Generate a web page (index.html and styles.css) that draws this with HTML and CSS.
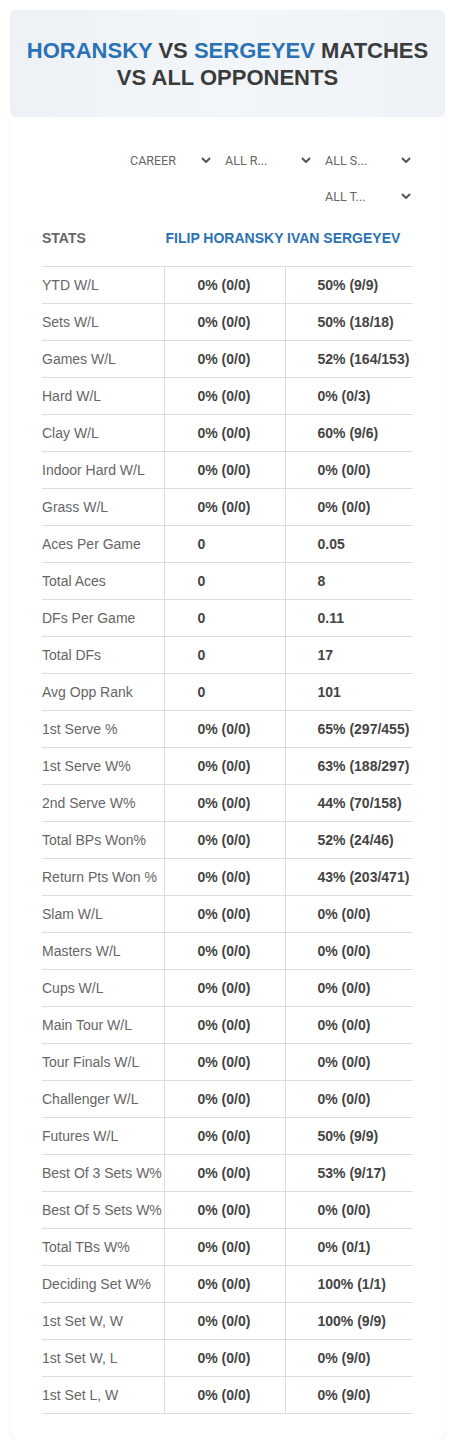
FILE: index.html
```html
<!DOCTYPE html>
<html lang="en">
<head>
    <meta charset="utf-8">
    <title>Horansky vs Sergeyev</title>
    <link rel="stylesheet" href="styles.css">
</head>
<body>
    <div class="page">
        <div class="title-box">
            <h1><span class="blue">HORANSKY</span> VS <span class="blue">SERGEYEV</span> MATCHES<br>VS ALL OPPONENTS</h1>
        </div>
        <div class="card">
            <div class="filters">
                <div class="pick first"><span>CAREER</span><svg viewBox="0 0 10 6"><path d="M1 1l4 4 4-4"/></svg></div>
                <div class="pick"><span>ALL R...</span><svg viewBox="0 0 10 6"><path d="M1 1l4 4 4-4"/></svg></div>
                <div class="pick"><span>ALL S...</span><svg viewBox="0 0 10 6"><path d="M1 1l4 4 4-4"/></svg></div>
                <div class="pick"><span>ALL T...</span><svg viewBox="0 0 10 6"><path d="M1 1l4 4 4-4"/></svg></div>
            </div>
            <table class="stats">
                <thead>
                    <tr>
                        <th class="c1">STATS</th>
                        <th class="c2">FILIP HORANSKY</th>
                        <th class="c3">IVAN SERGEYEV</th>
                    </tr>
                </thead>
                <tbody>
                    <tr><td>YTD W/L</td><td>0% (0/0)</td><td>50% (9/9)</td></tr>
                    <tr><td>Sets W/L</td><td>0% (0/0)</td><td>50% (18/18)</td></tr>
                    <tr><td>Games W/L</td><td>0% (0/0)</td><td>52% (164/153)</td></tr>
                    <tr><td>Hard W/L</td><td>0% (0/0)</td><td>0% (0/3)</td></tr>
                    <tr><td>Clay W/L</td><td>0% (0/0)</td><td>60% (9/6)</td></tr>
                    <tr><td>Indoor Hard W/L</td><td>0% (0/0)</td><td>0% (0/0)</td></tr>
                    <tr><td>Grass W/L</td><td>0% (0/0)</td><td>0% (0/0)</td></tr>
                    <tr><td>Aces Per Game</td><td>0</td><td>0.05</td></tr>
                    <tr><td>Total Aces</td><td>0</td><td>8</td></tr>
                    <tr><td>DFs Per Game</td><td>0</td><td>0.11</td></tr>
                    <tr><td>Total DFs</td><td>0</td><td>17</td></tr>
                    <tr><td>Avg Opp Rank</td><td>0</td><td>101</td></tr>
                    <tr><td>1st Serve %</td><td>0% (0/0)</td><td>65% (297/455)</td></tr>
                    <tr><td>1st Serve W%</td><td>0% (0/0)</td><td>63% (188/297)</td></tr>
                    <tr><td>2nd Serve W%</td><td>0% (0/0)</td><td>44% (70/158)</td></tr>
                    <tr><td>Total BPs Won%</td><td>0% (0/0)</td><td>52% (24/46)</td></tr>
                    <tr><td>Return Pts Won %</td><td>0% (0/0)</td><td>43% (203/471)</td></tr>
                    <tr><td>Slam W/L</td><td>0% (0/0)</td><td>0% (0/0)</td></tr>
                    <tr><td>Masters W/L</td><td>0% (0/0)</td><td>0% (0/0)</td></tr>
                    <tr><td>Cups W/L</td><td>0% (0/0)</td><td>0% (0/0)</td></tr>
                    <tr><td>Main Tour W/L</td><td>0% (0/0)</td><td>0% (0/0)</td></tr>
                    <tr><td>Tour Finals W/L</td><td>0% (0/0)</td><td>0% (0/0)</td></tr>
                    <tr><td>Challenger W/L</td><td>0% (0/0)</td><td>0% (0/0)</td></tr>
                    <tr><td>Futures W/L</td><td>0% (0/0)</td><td>50% (9/9)</td></tr>
                    <tr><td>Best Of 3 Sets W%</td><td>0% (0/0)</td><td>53% (9/17)</td></tr>
                    <tr><td>Best Of 5 Sets W%</td><td>0% (0/0)</td><td>0% (0/0)</td></tr>
                    <tr><td>Total TBs W%</td><td>0% (0/0)</td><td>0% (0/1)</td></tr>
                    <tr><td>Deciding Set W%</td><td>0% (0/0)</td><td>100% (1/1)</td></tr>
                    <tr><td>1st Set W, W</td><td>0% (0/0)</td><td>100% (9/9)</td></tr>
                    <tr><td>1st Set W, L</td><td>0% (0/0)</td><td>0% (9/0)</td></tr>
                    <tr><td>1st Set L, W</td><td>0% (0/0)</td><td>0% (9/0)</td></tr>
                </tbody>
            </table>
        </div>
    </div>
</body>
</html>
```

FILE: styles.css
```css
body {
    margin: 0;
    background: #fff;
    font-family: "Liberation Sans", Arial, sans-serif;
}
.page {
    padding: 10px 10px 0;
}
.title-box {
    height: 107px;
    border-radius: 6px;
    background: linear-gradient(90deg, #edf1f5 0%, #f3f6f9 50%, #eef2f6 100%);
    display: flex;
    align-items: center;
    justify-content: center;
}
.title-box h1 {
    margin: 0;
    padding-top: 1px;
    font-size: 22px;
    line-height: 27px;
    font-weight: bold;
    text-align: center;
    color: #3b3b3b;
}
.blue {
    color: #2b72b4;
}
.card {
    background: #fff;
    border-radius: 0 0 8px 8px;
    box-shadow: 0 1px 2px rgba(0, 0, 0, 0.08);
    padding: 25px 32px 25px;
}
.filters {
    display: flex;
    flex-wrap: wrap;
    justify-content: flex-end;
    column-gap: 5px;
    margin-right: -2px;
}
.pick {
    width: 95px;
    height: 36px;
    box-sizing: border-box;
    padding: 0 4px 0 5px;
    display: flex;
    align-items: center;
    justify-content: space-between;
    font-family: Roboto, "Open Sans", sans-serif;
    font-size: 12.5px;
    color: #666;
}
.pick.first {
    padding-left: 10px;
}
.pick svg {
    width: 10px;
    height: 6px;
    fill: none;
    stroke: #555;
    stroke-width: 2;
}
.stats {
    width: 371px;
    table-layout: fixed;
    border-collapse: collapse;
}
.stats th {
    height: 47px;
    padding: 0 0 5px;
    font-size: 14px;
    font-weight: bold;
    text-align: left;
    border-bottom: 1px solid #ddd;
    white-space: nowrap;
}
.stats th.c1 {
    color: #666;
    width: 122px;
}
.stats th.c2 {
    color: #2b72b4;
    width: 121px;
    text-align: center;
}
.stats th.c3 {
    color: #2b72b4;
    padding-left: 2px;
}
.stats td {
    height: 36px;
    padding: 0 0 0 33px;
    font-size: 14px;
    font-weight: bold;
    color: #444;
    border-bottom: 1px solid #ddd;
    border-left: 1px solid #ddd;
    white-space: nowrap;
}
.stats td:first-child {
    padding-left: 0;
    font-weight: normal;
    color: #666;
    border-left: none;
}
.stats td:last-child {
    padding-left: 32px;
}
```
